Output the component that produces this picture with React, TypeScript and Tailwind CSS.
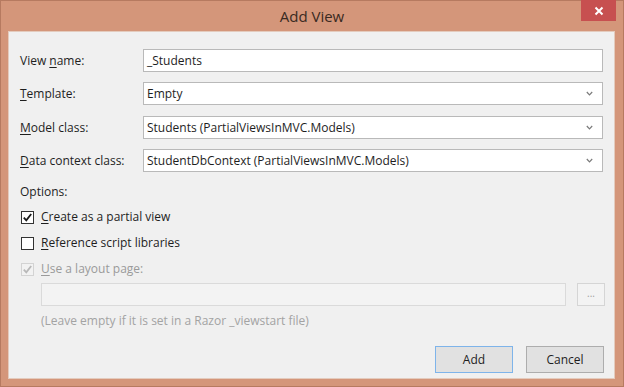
import React from "react";

const font = { fontFamily: '"Open Sans", "Noto Sans", "Liberation Sans", sans-serif' };

function Chevron() {
  return (
    <svg width="7" height="5" viewBox="0 0 7 5" className="shrink-0">
      <path d="M0.8 1 L3.5 3.8 L6.2 1" fill="none" stroke="#7a7a7a" strokeWidth="1.2" />
    </svg>
  );
}

function Field({ value, select }: { value: string; select?: boolean }) {
  return (
    <div className="flex-1 h-[23px] bg-white border border-[#b9b9b9] flex items-center pl-[3px] pr-[9px] text-[12px] text-[#1e1e1e]">
      <span className="flex-1">{value}</span>
      {select && <Chevron />}
    </div>
  );
}

function Row({ label, u, rest, value, select, mt }: { label?: string; u: string; rest: string; value: string; select?: boolean; mt: string }) {
  return (
    <div className={`flex items-center ${mt}`}>
      <div className="w-[123px] text-[12px] text-[#1e1e1e]">
        {label}
        <span className="underline underline-offset-2">{u}</span>
        {rest}
      </div>
      <Field value={value} select={select} />
    </div>
  );
}

function Check({ checked, disabled }: { checked?: boolean; disabled?: boolean }) {
  return (
    <div
      className={`w-[13px] h-[13px] border flex items-center justify-center ${
        disabled ? "border-[#d3d3d3] bg-[#f2f2f2]" : "border-[#333333] bg-white"
      }`}
    >
      {checked && (
        <svg width="11" height="11" viewBox="0 0 11 11">
          <path d="M1.8 5.6 L4.3 8.3 L9.2 2" fill="none" stroke={disabled ? "#b8b8b8" : "#1a1a1a"} strokeWidth="1.8" />
        </svg>
      )}
    </div>
  );
}

export default function App() {
  return (
    <div style={font} className="w-[624px] h-[387px] bg-[#d4967a] border border-[#b67a60] flex flex-col">
      <div className="h-[30px] relative flex items-center justify-center">
        <span className="text-[15px] text-[#3a2a22] mt-[1px]">Add View</span>
        <div className="absolute top-[-1px] right-[7px] w-[35px] h-[21px] bg-[#c75050] flex items-center justify-center">
          <svg width="10" height="10" viewBox="0 0 10 10">
            <path d="M1.5 1.5 L8.5 8.5 M8.5 1.5 L1.5 8.5" stroke="#ffffff" strokeWidth="2" />
          </svg>
        </div>
      </div>
      <div className="ml-[7px] mr-[8px] mb-[7px] flex-1 bg-[#f0f0f0] border border-[#e4cbbd] flex flex-col px-[11px] pt-[17px]">
        <Row label="View " u="n" rest="ame:" value="_Students" mt="" />
        <Row u="T" rest="emplate:" value="Empty" select mt="mt-[10px]" />
        <Row u="M" rest="odel class:" value="Students (PartialViewsInMVC.Models)" select mt="mt-[11px]" />
        <Row u="D" rest="ata context class:" value="StudentDbContext (PartialViewsInMVC.Models)" select mt="mt-[10px]" />
        <div className="mt-[8px] h-[24px] flex items-center text-[12px] text-[#1e1e1e]">Options:</div>
        <div className="h-[26px] flex items-center pl-[1px] gap-[7px] text-[12px] text-[#1e1e1e]">
          <Check checked />
          <span>
            <span className="underline underline-offset-2">C</span>reate as a partial view
          </span>
        </div>
        <div className="h-[26px] flex items-center pl-[1px] gap-[7px] text-[12px] text-[#1e1e1e]">
          <Check />
          <span>
            <span className="underline underline-offset-2">R</span>eference script libraries
          </span>
        </div>
        <div className="h-[26px] flex items-center pl-[1px] gap-[7px] text-[12px] text-[#9a9a9a]">
          <Check checked disabled />
          <span>
            <span className="underline underline-offset-2">U</span>se a layout page:
          </span>
        </div>
        <div className="mt-[1px] flex items-center pl-[21px]">
          <div className="flex-1 h-[23px] bg-[#f3f3f3] border border-[#dadada]" />
          <div className="ml-[11px] mr-[-2px] w-[28px] h-[23px] border border-[#d5d5d5] bg-[#f3f3f3] flex items-center justify-center text-[10px] text-[#a0a0a0] pb-[3px]">
            ...
          </div>
        </div>
        <div className="mt-[2px] h-[26px] flex items-center pl-[21px] text-[12px] text-[#a3a3a3]">
          (Leave empty if it is set in a Razor _viewstart file)
        </div>
        <div className="mt-[12px] flex justify-end gap-[13px] mr-[-1px]">
          <div className="w-[78px] h-[27px] bg-[#e1e1e1] border border-[#7eb4ea] flex items-center justify-center text-[12px] text-[#1e1e1e]">
            Add
          </div>
          <div className="w-[78px] h-[27px] bg-[#e1e1e1] border border-[#adadad] flex items-center justify-center text-[12px] text-[#1e1e1e]">
            Cancel
          </div>
        </div>
      </div>
    </div>
  );
}
